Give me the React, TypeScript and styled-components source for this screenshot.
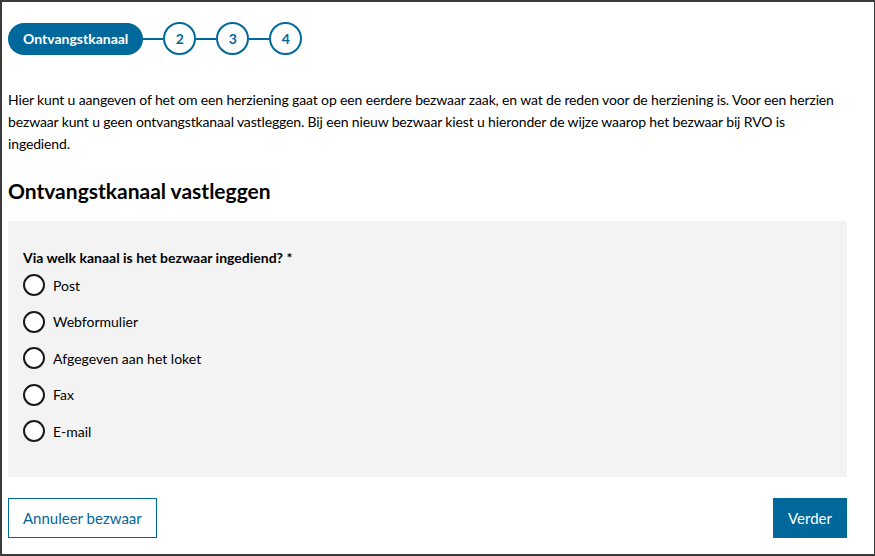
import styled, { createGlobalStyle } from 'styled-components';

const blue = '#01689b';

const GlobalStyle = createGlobalStyle`
  html, body { margin: 0; padding: 0; background: #fff; }
  body { font-family: Lato, "Liberation Sans", sans-serif; color: #000; }
  * { box-sizing: border-box; }
`;

const Frame = styled.div`
  width: 875px;
  height: 556px;
  border: 2px solid #3b3b3b;
  border-right-width: 1px;
  padding: 20px 27px 16px 6px;
  display: flex;
  flex-direction: column;
`;

const Stepper = styled.ol`
  display: flex;
  align-items: center;
  list-style: none;
  margin: 0;
  padding: 0;
`;

const ActiveStep = styled.li`
  height: 32px;
  padding: 0 15px;
  border-radius: 16px;
  background: ${blue};
  color: #fff;
  font-weight: 700;
  font-size: 14px;
  display: flex;
  align-items: center;
`;

const Connector = styled.span`
  width: 20px;
  height: 2px;
  background: ${blue};
`;

const Step = styled.li`
  width: 33px;
  height: 33px;
  border-radius: 50%;
  border: 2px solid ${blue};
  color: ${blue};
  font-weight: 700;
  font-size: 14px;
  display: flex;
  align-items: center;
  justify-content: center;
`;

const Intro = styled.p`
  margin: 34px 0 0;
  padding-right: 6px;
  font-size: 14px;
  letter-spacing: -0.14px;
  line-height: 22px;
`;

const Heading = styled.h2`
  margin: 22px 0 0;
  font-size: 21px;
  font-weight: 700;
  line-height: 28px;
`;

const Panel = styled.fieldset`
  margin: 16px 0 0;
  border: none;
  background: #f3f3f3;
  padding: 26px 15px 0;
  height: 257px;
  display: flex;
  flex-direction: column;
`;

const Question = styled.legend`
  float: left;
  padding: 0;
  font-size: 14px;
  font-weight: 700;
  line-height: 22px;
`;

const Options = styled.div`
  display: flex;
  flex-direction: column;
  gap: 14.5px;
  margin-top: 5px;
`;

const Option = styled.label`
  display: flex;
  align-items: center;
  gap: 8px;
  font-size: 14px;
  height: 22px;
`;

const RadioCircle = styled.span`
  width: 22px;
  height: 22px;
  border-radius: 50%;
  border: 2px solid #1a1a1a;
  background: #fff;
`;

const Actions = styled.div`
  display: flex;
  justify-content: space-between;
  margin-top: 21px;
`;

const Button = styled.button<{ $primary?: boolean }>`
  height: 40px;
  padding: 0 14px;
  font-family: inherit;
  font-size: 15px;
  border: 1px solid ${blue};
  background: ${(p) => (p.$primary ? blue : '#fff')};
  color: ${(p) => (p.$primary ? '#fff' : blue)};
  cursor: pointer;
`;

const channels = ['Post', 'Webformulier', 'Afgegeven aan het loket', 'Fax', 'E-mail'];

export default function App() {
  return (
    <>
      <GlobalStyle />
      <Frame>
        <Stepper>
          <ActiveStep>Ontvangstkanaal</ActiveStep>
          <Connector />
          <Step>2</Step>
          <Connector />
          <Step>3</Step>
          <Connector />
          <Step>4</Step>
        </Stepper>
        <Intro>
          Hier kunt u aangeven of het om een herziening gaat op een eerdere bezwaar zaak, en wat de
          reden voor de herziening is. Voor een herzien bezwaar kunt u geen ontvangstkanaal
          vastleggen. Bij een nieuw bezwaar kiest u hieronder de wijze waarop het bezwaar bij RVO is
          ingediend.
        </Intro>
        <Heading>Ontvangstkanaal vastleggen</Heading>
        <Panel>
          <Question>Via welk kanaal is het bezwaar ingediend? *</Question>
          <Options>
            {channels.map((c) => (
              <Option key={c}>
                <RadioCircle />
                {c}
              </Option>
            ))}
          </Options>
        </Panel>
        <Actions>
          <Button>Annuleer bezwaar</Button>
          <Button $primary>Verder</Button>
        </Actions>
      </Frame>
    </>
  );
}
